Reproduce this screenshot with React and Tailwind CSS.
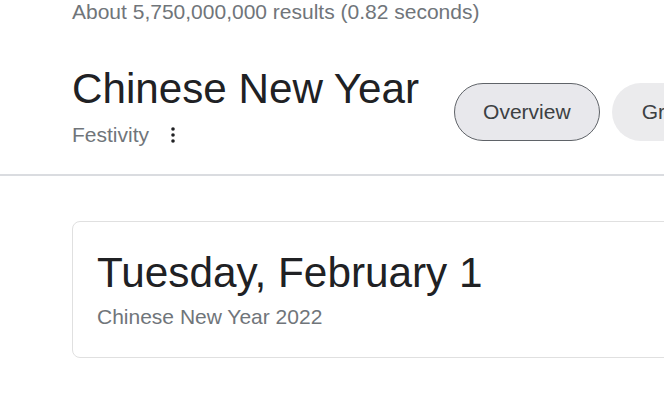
export default function App() {
  return (
    <div className="w-[664px] h-[411px] overflow-hidden bg-white font-['Liberation_Sans',Arial,sans-serif]">
      <div className="pl-[72px] text-[21px] leading-[24px] text-[#70757a] whitespace-nowrap">
        About 5,750,000,000 results (0.82 seconds)
      </div>

      <div className="flex items-start pl-[72px] mt-[41px] whitespace-nowrap">
        <div className="flex flex-col">
          <h1 className="text-[42.2px] leading-[48px] text-[#202124]">Chinese New Year</h1>
          <div className="flex items-center mt-[10px]">
            <span className="text-[21px] leading-[24px] text-[#70757a]">Festivity</span>
            <svg className="ml-[12px] w-6 h-6 text-[#202124]" viewBox="0 0 24 24" fill="currentColor">
              <circle cx="12" cy="6" r="1.8" />
              <circle cx="12" cy="12" r="1.8" />
              <circle cx="12" cy="18" r="1.8" />
            </svg>
          </div>
        </div>
        <div className="flex gap-[12px] ml-[35px] mt-[18px] shrink-0">
          <div className="h-[58px] px-[28px] flex items-center rounded-full border border-[#5f6368] bg-[#e8e8ec] text-[21px] text-[#3c4043]">
            Overview
          </div>
          <div className="h-[58px] px-[30px] flex items-center rounded-full bg-[#ebebed] text-[21px] text-[#3c4043]">
            Graphs
          </div>
        </div>
      </div>

      <div className="mt-[27px] h-[2px] bg-[#dadce0]" />

      <div className="ml-[72px] mt-[45px] w-[640px] rounded-lg border border-[#e0e0e0] px-6 pt-[27px] pb-[28px] whitespace-nowrap">
        <div className="text-[42.3px] leading-[48px] text-[#202124]">Tuesday, February 1</div>
        <div className="mt-[8px] text-[21px] leading-[24px] text-[#70757a]">Chinese New Year 2022</div>
      </div>
    </div>
  );
}
